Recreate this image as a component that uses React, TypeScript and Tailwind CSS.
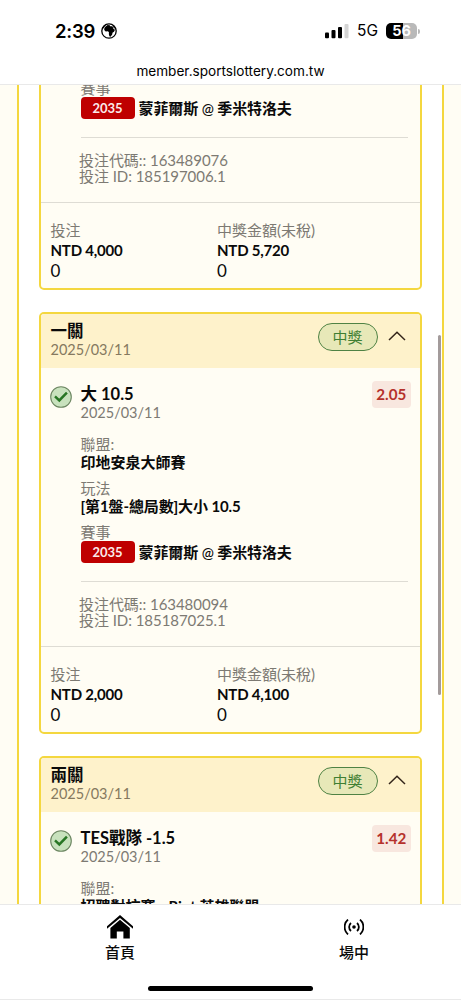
// src/App.tsx
type Bet = {
  title?: string;
  date?: string;
  pick?: string;
  odds?: string;
  league?: string;
  play?: string;
  match?: boolean;
  code?: string;
  id?: string;
  stake?: string;
  win?: string;
};

const bets: Bet[] = [
  { match: true, code: "163489076", id: "185197006.1", stake: "4,000", win: "5,720" },
  {
    title: "一關",
    date: "2025/03/11",
    pick: "大 10.5",
    odds: "2.05",
    league: "印地安泉大師賽",
    play: "[第1盤-總局數]大小 10.5",
    match: true,
    code: "163480094",
    id: "185187025.1",
    stake: "2,000",
    win: "4,100",
  },
  {
    title: "兩關",
    date: "2025/03/11",
    pick: "TES戰隊 -1.5",
    odds: "1.42",
    league: "招聘對抗賽 - Riot 英雄聯盟",
  },
];

function StatusBar() {
  return (
    <div className="flex h-[62px] items-center justify-between pl-[55px] pr-[41px] font-['Inter',sans-serif]">
      <div className="flex items-center gap-[6px]">
        <span className="text-[18.5px] leading-none font-semibold tracking-[-0.2px]">2:39</span>
        <svg viewBox="0 0 16 16" className="h-4 w-4">
          <circle cx="8" cy="8" r="7.2" fill="#fff" stroke="#000" strokeWidth="1.3" />
          <path
            d="M4.6 3.6l2-1.6 2.2.3.4.9 2.2.1 1.2 2.6 1.4.9-1 1.9-1.5 1-.3 1.8-1.7 2.3-1.1-.5-.6-2.3.2-1.5-1-1.2-2.3.2-1.5-1.6.2-2z"
            fill="#000"
          />
          <path d="M1.2 5l2.4-3 2-.8-1.8 2.3-1.3 2zM11 1.8l2.6 2.2.9 2-1.9-1.2z" fill="#000" />
        </svg>
      </div>
      <div className="flex items-center">
        <svg viewBox="0 0 24 16" className="h-4 w-6">
          <rect x="0" y="9.5" width="4" height="5.8" rx="1" />
          <rect x="6.5" y="7" width="4" height="8.3" rx="1" />
          <rect x="13" y="4" width="4" height="11.3" rx="1" />
          <rect x="19.5" y="1" width="4" height="14.3" rx="1" fill="#d4d4d4" />
        </svg>
        <span className="ml-[8px] text-[15.5px] leading-none">5G</span>
        <div className="ml-[8px] flex h-4 w-[31px] items-center justify-center rounded-[5px] bg-linear-to-r from-black from-56% to-[#b9b9b9] to-56% text-[14.5px] leading-none font-bold text-white">
          56
        </div>
        <span className="ml-px h-[5px] w-[2px] rounded-r-full bg-[#b9b9b9]" />
      </div>
    </div>
  );
}

function CheckIcon() {
  return (
    <svg viewBox="0 0 22 22" className="mt-[18px] h-[22px] w-[22px] shrink-0">
      <circle cx="11" cy="11" r="10.3" fill="#c8e2bd" stroke="#6b8560" strokeWidth="1.1" />
      <path d="M5 10.4l4.3 4 7.6-7.8" fill="none" stroke="#287624" strokeWidth="2.5" />
    </svg>
  );
}

function BetCard({ bet }: { bet: Bet }) {
  return (
    <div className="overflow-hidden rounded-[5px] border-2 border-[#f4d73f] bg-[#fffdf4]">
      {bet.title && (
        <div className="flex h-[54px] bg-[#fef2cb] pl-[9.5px] pr-[14.5px]">
          <div className="flex-1 pt-2">
            <div className="text-[16.5px] leading-[19px] font-bold">{bet.title}</div>
            <div className="text-[14.5px] leading-[17px] text-[#85795f]">{bet.date}</div>
          </div>
          <div className="mt-[9px] flex h-[28px] w-[60px] items-center justify-center rounded-full border border-[#4f8244] bg-[#e7e8b8] text-[15px] text-[#3f7f33]">
            中獎
          </div>
          <svg viewBox="0 0 18 10" className="mt-[17px] ml-[10px] h-[10px] w-[18px]">
            <path d="M1 9l8-7.8L17 9" fill="none" stroke="#33251a" strokeWidth="1.5" />
          </svg>
        </div>
      )}

      <div className="flex pl-[9px] pr-[9.5px]">
        {bet.pick ? <CheckIcon /> : <div className="w-[22px] shrink-0" />}
        <div className="ml-[8.5px] flex-1">
          {bet.pick && (
            <div className="flex h-[67px] justify-between pt-[13px]">
              <div className="pt-[3px]">
                <div className="text-[16.5px] leading-[20px] font-bold">{bet.pick}</div>
                <div className="text-[14.5px] leading-[17px] text-[#7d7a73]">{bet.date}</div>
              </div>
              <div className="flex h-[27px] w-[38.5px] items-center justify-center rounded-[4px] bg-[#f8e7df] text-[15.2px] font-bold text-[#b5312b]">
                {bet.odds}
              </div>
            </div>
          )}
          {bet.league && (
            <div className="h-[44px]">
              <div className="leading-[18px] text-[#7d7a73]">聯盟:</div>
              <div className="leading-[19px] font-bold">{bet.league}</div>
            </div>
          )}
          {bet.play && (
            <div className="h-[44px]">
              <div className="leading-[18px] text-[#7d7a73]">玩法</div>
              <div className="leading-[18px] font-bold tracking-[-0.12px]">{bet.play}</div>
            </div>
          )}
          {bet.match && (
            <div className="h-[58px]">
              <div className="leading-[18px] text-[#7d7a73]">賽事</div>
              <div className="flex items-center">
                <span className="flex h-[22px] w-[54px] items-center justify-center rounded-[4px] bg-[#bf0000] text-[13px] font-bold text-[#fbeaea]">
                  2035
                </span>
                <span className="ml-1 font-bold tracking-[-0.1px]">
                  蒙菲爾斯 <span className="text-[14.5px] font-medium">@</span> 季米特洛夫
                </span>
              </div>
            </div>
          )}
          {bet.code && (
            <div className="mr-[2.5px] h-[65px] border-t border-[#dedcd4] pt-[14px] tracking-[-0.05px] text-[#7d7a73]">
              <div className="-ml-[1.5px] leading-[16px]">投注代碼:: {bet.code}</div>
              <div className="-ml-[1.5px] leading-[16px]">投注 ID: {bet.id}</div>
            </div>
          )}
        </div>
      </div>

      {bet.stake && (
        <div className="grid h-[86px] grid-cols-[166.5px_1fr] border-t border-[#dedcd4] pt-[17px] pl-[9.5px]">
          <div>
            <div className="leading-[20px] text-[#7d7a73]">投注</div>
            <div className="leading-[20px] font-bold tracking-[-0.2px]">NTD {bet.stake}</div>
            <div className="text-[17px] leading-[21px]">0</div>
          </div>
          <div>
            <div className="leading-[20px] text-[#7d7a73]">中獎金額(未稅)</div>
            <div className="leading-[20px] font-bold tracking-[-0.2px]">NTD {bet.win}</div>
            <div className="text-[17px] leading-[21px]">0</div>
          </div>
        </div>
      )}
    </div>
  );
}

function BottomNav() {
  return (
    <nav className="h-[96px] border-t border-[#e9e9e9] bg-white">
      <div className="flex h-[81px] justify-between pr-[77px] pl-[90px] pt-[10px] font-medium">
        <div className="flex w-[60px] flex-col items-center">
          <svg viewBox="0 0 26 24" className="h-6 w-[26px]">
            <path d="M0 11.2L13 0l13 11.2v2.6L13 3 0 13.8z" />
            <path d="M13 4.8l9.8 8.2V23.4h-6.4v-6.8H9.8v6.8H3.4V13z" />
          </svg>
          <span className="mt-[3px] leading-[20px]">首頁</span>
        </div>
        <div className="flex w-[60px] flex-col items-center">
          <svg viewBox="0 0 20 16" className="mt-[4px] h-4 w-5" fill="none" stroke="#000" strokeWidth="1.8">
            <circle cx="10" cy="8" r="1.8" fill="#000" stroke="none" />
            <path d="M7 4a5.2 5.2 0 0 0 0 8M13 4a5.2 5.2 0 0 1 0 8M4 .6a9.8 9.8 0 0 0 0 14.8M16 .6a9.8 9.8 0 0 1 0 14.8" />
          </svg>
          <span className="mt-[7px] leading-[20px]">場中</span>
        </div>
      </div>
      <div className="mx-auto h-[5px] w-[165px] rounded-full bg-black" />
      <div className="mt-[8px] h-px bg-[#e9e9e9]" />
    </nav>
  );
}

export default function App() {
  return (
    <div className="flex h-[1000px] w-[461px] flex-col overflow-hidden bg-white font-['Lato','Noto_Sans_CJK_TC',sans-serif] text-[15px] text-[#0a0a0a]">
      <header className="h-[85px] shrink-0 border-b border-[#e9e9e9] text-black">
        <StatusBar />
        <div className="text-center font-['Inter',sans-serif] text-[13.6px] leading-[18px]">
          member.sportslottery.com.tw
        </div>
      </header>

      <main className="relative h-[819px] shrink-0 overflow-hidden bg-[#fffdf4] pr-[17px] pl-[17px]">
        <div className="flow-root h-full border-x-2 border-[#f4d73f] bg-white pr-[20px] pl-[20px]">
          <div className="-mt-[8px] flex flex-col gap-[22px]">
            {bets.map((bet) => (
              <BetCard key={bet.code ?? bet.title} bet={bet} />
            ))}
          </div>
        </div>
        {/* scroll thumb */}
        <div className="absolute top-[250px] right-[20px] h-[360px] w-[3px] rounded-full bg-[#a39b9b]" />
      </main>

      <BottomNav />
    </div>
  );
}
